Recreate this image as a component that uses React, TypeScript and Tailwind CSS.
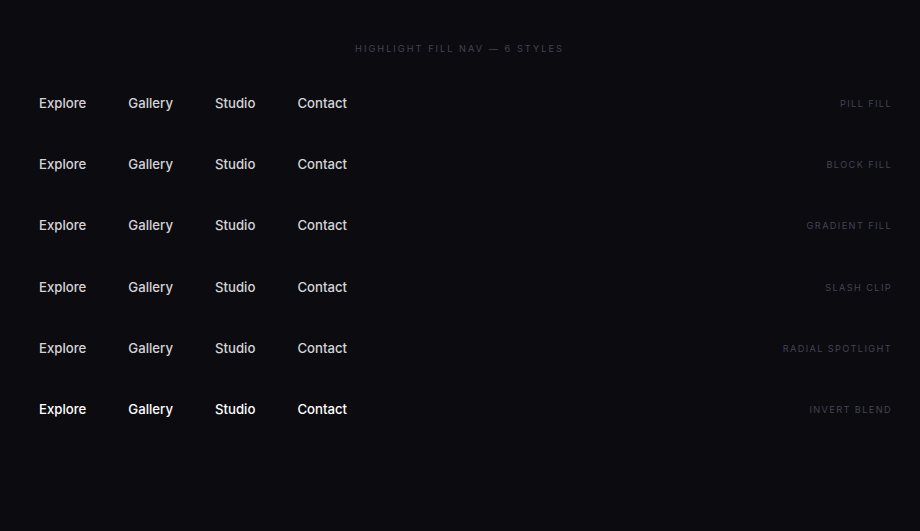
const items = ["Explore", "Gallery", "Studio", "Contact"];

const styles = [
  { name: "Pill Fill", active: false },
  { name: "Block Fill", active: false },
  { name: "Gradient Fill", active: false },
  { name: "Slash Clip", active: false },
  { name: "Radial Spotlight", active: false },
  { name: "Invert Blend", active: true },
];

function NavRow({ name, active }: { name: string; active: boolean }) {
  return (
    <div className="flex items-center justify-between h-[61.2px]">
      <nav className="flex items-center gap-[10px]">
        {items.map((item) => (
          <a
            key={item}
            className={
              "px-4 py-2 text-[13.2px] font-medium " +
              (active ? "text-white" : "text-[#d4d4d8]")
            }
          >
            {item}
          </a>
        ))}
      </nav>
      <span className="text-[9.2px] uppercase tracking-[0.15em] text-[#444452]">{name}</span>
    </div>
  );
}

export default function App() {
  return (
    <div
      className="min-h-screen bg-[#0b0b10] pl-[23px] pr-[28px] pt-[42px]"
      style={{ fontFamily: "Inter, 'Noto Sans', sans-serif" }}
    >
      <h1 className="text-center text-[9.2px] uppercase tracking-[0.22em] text-[#444452] mb-[17.5px] pl-[4px]">
        Highlight Fill Nav — 6 Styles
      </h1>
      <div className="flex flex-col">
        {styles.map((s) => (
          <NavRow key={s.name} name={s.name} active={s.active} />
        ))}
      </div>
    </div>
  );
}
